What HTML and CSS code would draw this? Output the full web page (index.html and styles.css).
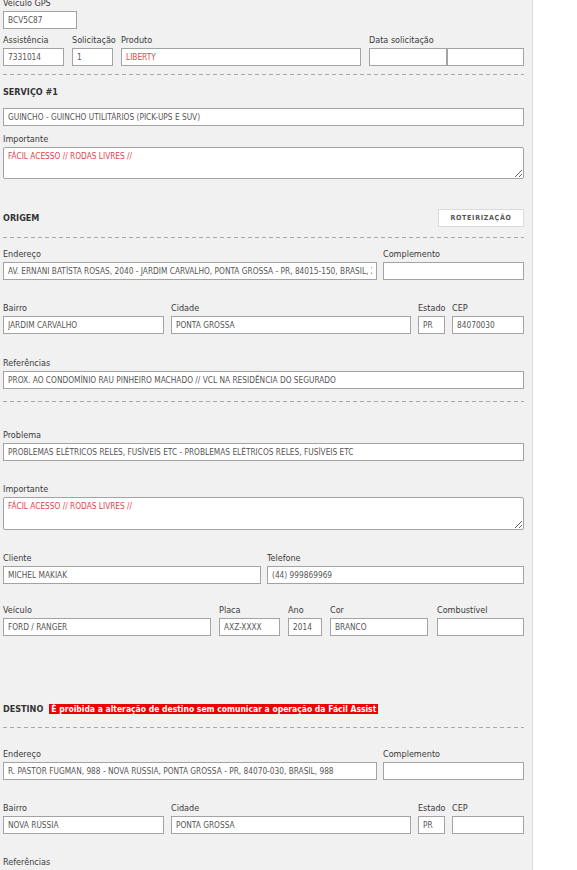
FILE: index.html
```html
<!DOCTYPE html>
<html lang="pt-BR">
<head>
<meta charset="utf-8">
<title>Serviço</title>
<link rel="stylesheet" href="styles.css">
</head>
<body>
<div class="panel">
  <div class="row r-gps">
    <div class="field w-gps"><label>Veículo GPS</label><input class="in" value="BCV5C87"></div>
  </div>
  <div class="row r-first g8">
    <div class="field w-assist"><label>Assistência</label><input class="in" value="7331014"></div>
    <div class="field w-solic"><label>Solicitação</label><input class="in" value="1"></div>
    <div class="field w-prod"><label>Produto</label><input class="in red" value="LIBERTY"></div>
    <div class="field w-data">
      <label>Data solicitação</label>
      <div class="pair"><input class="in w-d1" value=""><input class="in w-d2" value=""></div>
    </div>
  </div>
  <div class="dash d-1"></div>

  <h3 class="head h-serv">SERVIÇO #1</h3>
  <div class="row r-serv">
    <div class="field grow"><input class="in" value="GUINCHO - GUINCHO UTILITÁRIOS (PICK-UPS E SUV)"></div>
  </div>
  <div class="row r-imp1">
    <div class="field grow"><label>Importante</label><textarea class="ta red t1">FÁCIL ACESSO // RODAS LIVRES //</textarea></div>
  </div>

  <div class="headrow hr-origem">
    <h3 class="head">ORIGEM</h3>
    <button class="btn">ROTEIRIZAÇÃO</button>
  </div>
  <div class="dash d-2"></div>

  <div class="row r-end g6">
    <div class="field w-end"><label>Endereço</label><input class="in" value="AV. ERNANI BATÍSTA ROSAS, 2040 - JARDIM CARVALHO, PONTA GROSSA - PR, 84015-150, BRASIL, 2040"></div>
    <div class="field grow"><label>Complemento</label><input class="in" value=""></div>
  </div>
  <div class="row r-std g7">
    <div class="field w-bairro"><label>Bairro</label><input class="in" value="JARDIM CARVALHO"></div>
    <div class="field w-cidade"><label>Cidade</label><input class="in" value="PONTA GROSSA"></div>
    <div class="field w-uf"><label>Estado</label><input class="in" value="PR"></div>
    <div class="field grow"><label>CEP</label><input class="in" value="84070030"></div>
  </div>
  <div class="row r-ref">
    <div class="field grow"><label>Referências</label><input class="in" value="PROX. AO CONDOMÍNIO RAU PINHEIRO MACHADO // VCL NA RESIDÊNCIA DO SEGURADO"></div>
  </div>
  <div class="dash d-3"></div>

  <div class="row r-prob">
    <div class="field grow"><label>Problema</label><input class="in" value="PROBLEMAS ELÉTRICOS RELES, FUSÍVEIS ETC - PROBLEMAS ELÉTRICOS RELES, FUSÍVEIS ETC"></div>
  </div>
  <div class="row r-std">
    <div class="field grow"><label>Importante</label><textarea class="ta red t2">FÁCIL ACESSO // RODAS LIVRES //</textarea></div>
  </div>
  <div class="row r-std g6">
    <div class="field w-cli"><label>Cliente</label><input class="in" value="MICHEL MAKIAK"></div>
    <div class="field grow"><label>Telefone</label><input class="in" value="(44) 999869969"></div>
  </div>
  <div class="row r-veic g8">
    <div class="field w-veic"><label>Veículo</label><input class="in" value="FORD / RANGER"></div>
    <div class="field w-placa"><label>Placa</label><input class="in" value="AXZ-XXXX"></div>
    <div class="field w-ano"><label>Ano</label><input class="in" value="2014"></div>
    <div class="field w-cor"><label>Cor</label><input class="in" value="BRANCO"></div>
    <div class="field grow ml1"><label>Combustível</label><input class="in" value=""></div>
  </div>

  <div class="headrow hr-destino">
    <h3 class="head">DESTINO</h3>
    <span class="alert">É proibida a alteração de destino sem comunicar a operação da Fácil Assist</span>
  </div>
  <div class="dash d-4"></div>

  <div class="row r-end2 g6">
    <div class="field w-end"><label>Endereço</label><input class="in" value="R. PASTOR FUGMAN, 988 - NOVA RÚSSIA, PONTA GROSSA - PR, 84070-030, BRASIL, 988"></div>
    <div class="field grow"><label>Complemento</label><input class="in" value=""></div>
  </div>
  <div class="row r-std g7">
    <div class="field w-bairro"><label>Bairro</label><input class="in" value="NOVA RÚSSIA"></div>
    <div class="field w-cidade"><label>Cidade</label><input class="in" value="PONTA GROSSA"></div>
    <div class="field w-uf"><label>Estado</label><input class="in" value="PR"></div>
    <div class="field grow"><label>CEP</label><input class="in" value=""></div>
  </div>
  <div class="row r-std">
    <div class="field grow"><label>Referências</label><input class="in" value=""></div>
  </div>
</div>
</body>
</html>
```

FILE: styles.css
```css
html, body {
  margin: 0;
  padding: 0;
  background: #ffffff;
  overflow: hidden;
}
body {
  font-family: "DejaVu Sans Condensed", "DejaVu Sans", sans-serif;
  font-stretch: condensed;
  color: #333333;
}
.panel {
  width: 521px;
  height: 900px;
  padding: 0 8px 0 3px;
  background: #f1f1f1;
  border-right: 1px solid #dcdcdc;
}
.row {
  display: flex;
  align-items: flex-end;
}
.g6 { gap: 6px; }
.g7 { gap: 7px; }
.g8 { gap: 8px; }
.field {
  display: flex;
  flex-direction: column;
  min-width: 0;
}
.grow { flex: 1; }
.ml1 { margin-left: 1px; }
label {
  display: block;
  box-sizing: border-box;
  font-size: 9px;
  line-height: 9px;
  height: 12px;
  white-space: nowrap;
  color: #3a3a3a;
}
.in {
  box-sizing: border-box;
  width: 100%;
  height: 18px;
  margin: 0;
  padding: 0 4px;
  border: 1px solid #a3a3a3;
  border-radius: 0;
  background: #ffffff;
  font-family: inherit;
  font-stretch: condensed;
  font-size: 8.25px;
  color: #555555;
  outline: none;
}
.red { color: #e2434b; }
.ta {
  box-sizing: border-box;
  width: 100%;
  margin: 0;
  padding: 3px 4px;
  border: 1px solid #a3a3a3;
  border-radius: 2px;
  background: #ffffff;
  font-family: inherit;
  font-stretch: condensed;
  font-size: 8.25px;
  line-height: 10px;
  resize: vertical;
  outline: none;
  display: block;
}
.t1 { height: 32px; }
.t2 { height: 33px; }

.w-gps { width: 74px; }
.w-assist { width: 61px; }
.w-solic { width: 41px; }
.w-prod { width: 240px; }
.w-data { width: 155px; }
.pair { display: flex; }
.w-d1 { width: 78px; }
.w-d2 { width: 77px; }
.w-end { width: 374px; }
.w-bairro { width: 161px; }
.w-cidade { width: 240px; }
.w-uf { width: 27px; }
.w-cli { width: 258px; }
.w-veic { width: 208px; }
.w-placa { width: 61px; }
.w-ano { width: 34px; }
.w-cor { width: 98px; }

.r-gps { margin-top: -1px; }
.r-first { margin-top: 7px; }
.dash {
  height: 1px;
  background: repeating-linear-gradient(to right, #a8a8a8 0 4px, transparent 4px 7px);
}
.d-1 { margin-top: 8px; }
.head {
  margin: 0;
  font-size: 9px;
  line-height: 12px;
  font-weight: bold;
  color: #333333;
}
.h-serv { margin-top: 11px; }
.r-serv { margin-top: 10px; }
.r-imp1 { margin-top: 9px; }
.headrow {
  display: flex;
  align-items: center;
  justify-content: space-between;
}
.hr-origem { margin-top: 30px; height: 18px; }
.btn {
  box-sizing: border-box;
  width: 86px;
  height: 18px;
  margin: 0;
  padding: 0;
  border: 1px solid #dadada;
  background: #ffffff;
  font-family: inherit;
  font-stretch: condensed;
  font-size: 7px;
  font-weight: bold;
  letter-spacing: 0.7px;
  color: #555555;
}
.d-2 { margin-top: 10px; }
.r-end { margin-top: 12px; }
.r-std { margin-top: 24px; }
.r-ref { margin-top: 25px; }
.d-3 { margin-top: 12px; }
.r-prob { margin-top: 29px; }
.r-veic { margin-top: 22px; }
.hr-destino {
  margin-top: 67px;
  height: 12px;
  justify-content: flex-start;
  gap: 6px;
}
.alert {
  background: #ee0000;
  color: #ffffff;
  font-size: 8.5px;
  font-weight: bold;
  line-height: 10px;
  padding: 0 2px;
  white-space: nowrap;
}
.d-4 { margin-top: 12px; }
.r-end2 { margin-top: 22px; }
```
